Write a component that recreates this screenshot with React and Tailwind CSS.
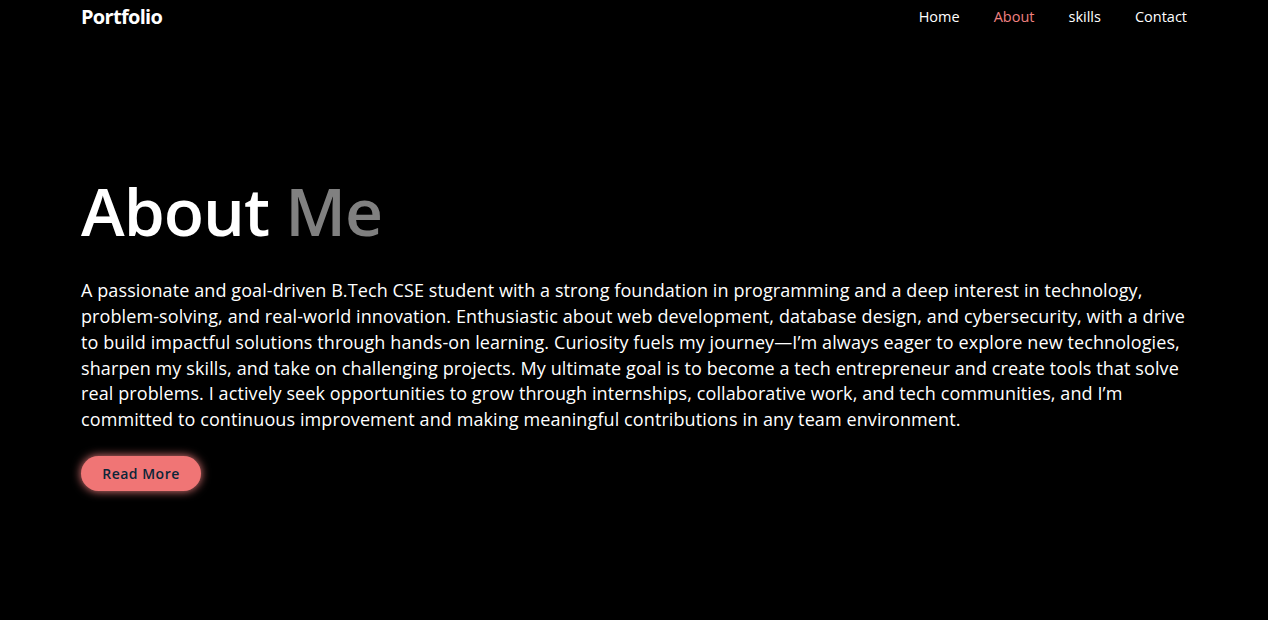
import React from "react";

const links = ["Home", "About", "skills", "Contact"];

function Navbar() {
  return (
    <header className="flex items-center justify-between px-[81px] h-[33px]">
      <a className="text-white text-[20px] font-bold tracking-[-0.7px] font-['Open_Sans',sans-serif]">
        Portfolio
      </a>
      <nav className="flex items-center gap-[34px] text-[14.5px]">
        {links.map((l) => (
          <a
            key={l}
            className={l === "About" ? "text-[#f08080]" : "text-white"}
          >
            {l}
          </a>
        ))}
      </nav>
    </header>
  );
}

export default function App() {
  return (
    <div className="min-h-[620px] bg-black text-white font-['Open_Sans',sans-serif]">
      <Navbar />
      <section className="px-[81px] pt-[138px]">
        <h1 className="text-[66px] font-semibold leading-[1.2] tracking-[-1px]">
          About <span className="text-[#808080]">Me</span>
        </h1>
        <p className="mt-[28px] max-w-[1107px] text-[18px] tracking-[0.1px] leading-[25.8px] font-medium">
          A passionate and goal-driven B.Tech CSE student with a strong foundation in
          programming and a deep interest in technology, problem-solving, and
          real-world innovation. Enthusiastic about web development, database design,
          and cybersecurity, with a drive to build impactful solutions through
          hands-on learning. Curiosity fuels my journey—I’m always eager to explore
          new technologies, sharpen my skills, and take on challenging projects. My
          ultimate goal is to become a tech entrepreneur and create tools that solve
          real problems. I actively seek opportunities to grow through internships,
          collaborative work, and tech communities, and I’m committed to continuous
          improvement and making meaningful contributions in any team environment.
        </p>
        <button className="mt-[23px] w-[120px] h-[35px] rounded-full bg-[#f07575] text-[#0b2538] text-[14px] font-semibold tracking-[0.5px] shadow-[0_0_10px_#f08080]">
          Read More
        </button>
      </section>
    </div>
  );
}
